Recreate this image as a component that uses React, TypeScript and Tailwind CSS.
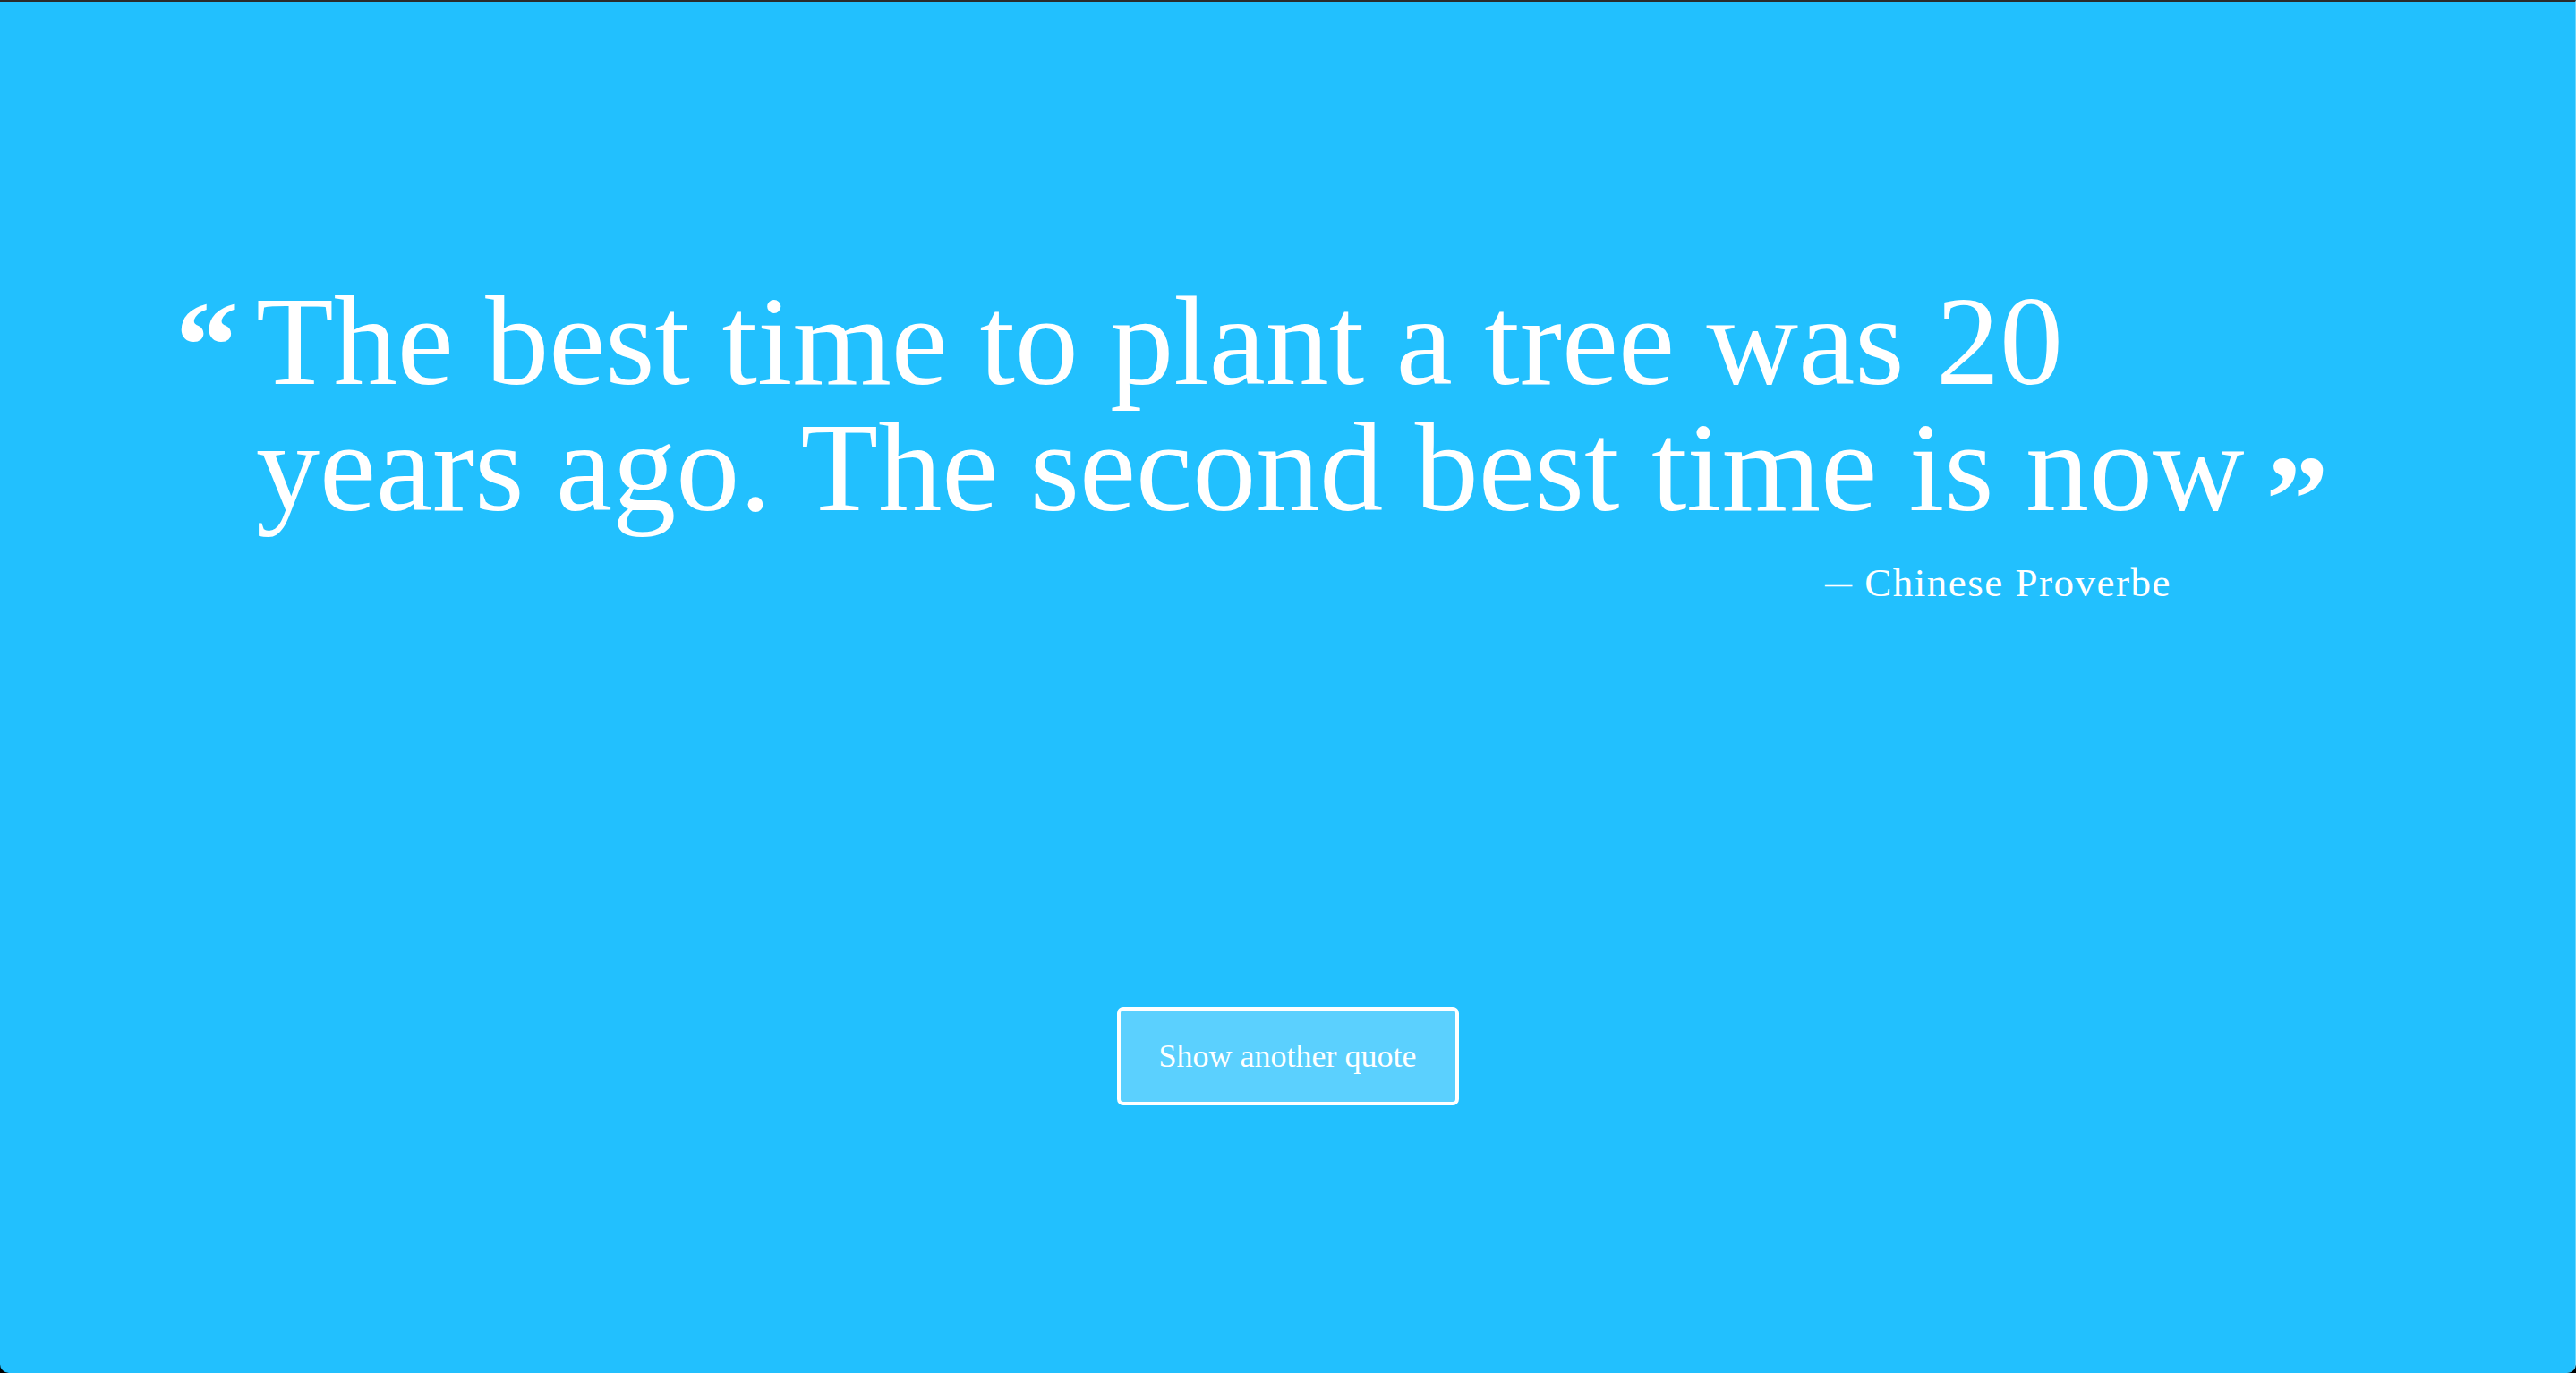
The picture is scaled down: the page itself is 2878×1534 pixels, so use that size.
export default function App() {
  return (
    <div className="h-screen w-full bg-black">
      <div
        className="flex h-full w-full flex-col rounded-b-[10px] border-t-2 border-r border-t-[#2b2b2b] border-r-[#6fd6fc] bg-[#22c0fe] text-white"
        style={{ fontFamily: '"Liberation Serif", "Times New Roman", serif' }}
      >
        <div className="mt-[309px] flex pl-[196px]">
          <span className="mt-[5px] w-[90px] shrink-0 text-[140px] font-bold leading-none">“</span>
          <p className="text-[142px] leading-[141px] font-normal">
            The best time to plant a tree was 20
            <br />
            years ago. The second best time is now
            <span className="ml-[24px] align-[-35px] text-[140px] font-bold leading-[0]">”</span>
          </p>
        </div>
        <div className="mt-[36px] flex justify-end pr-[451px]">
          <span className="text-[45px] leading-[45px] tracking-[1.5px]">
            <span className="align-[4px] text-[30px]">—</span> Chinese Proverbe
          </span>
        </div>
        <div className="mt-[451px] flex justify-center">
          <button className="flex h-[110px] w-[382px] items-center justify-center rounded-[7px] border-4 border-white bg-[#5bd0fe] text-[36px] text-white">
            Show another quote
          </button>
        </div>
      </div>
    </div>
  );
}
